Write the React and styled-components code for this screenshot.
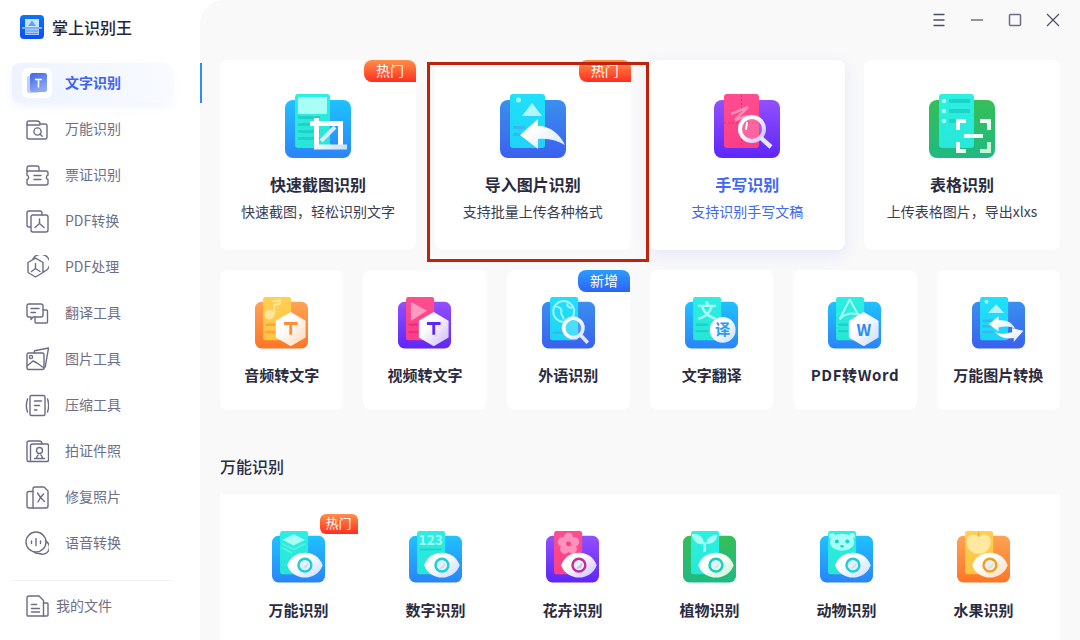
import React from 'react';
import styled, { createGlobalStyle } from 'styled-components';

const GlobalStyle = createGlobalStyle`
  html, body {
    margin: 0;
    padding: 0;
    background: #fff;
    font-family: "Noto Sans CJK SC", "Noto Sans", sans-serif;
  }
  * {
    box-sizing: border-box;
  }
`;

const Page = styled.div`
  display: flex;
  width: 1080px;
  height: 640px;
  overflow: hidden;
  background: #fff;
`;

const Sidebar = styled.aside`
  position: relative;
  z-index: 1;
  flex: 0 0 200px;
  padding: 15px 28px 0 12px;
`;

const Brand = styled.div`
  display: flex;
  align-items: center;
  gap: 8px;
  height: 24px;
  padding-left: 8px;
  margin-bottom: 24px;
  font-size: 16px;
  font-weight: 500;
  color: #23233a;
`;

const Nav = styled.nav`
  display: flex;
  flex-direction: column;
  gap: 6px;
`;

const NavItem = styled.div`
  position: relative;
  display: flex;
  align-items: center;
  gap: 13px;
  height: 40px;
  padding-left: 10px;
  border-radius: 8px;
  font-size: 14px;
  color: ${(p) => (p.$active ? '#3e63f2' : '#6d6f86')};
  font-weight: ${(p) => (p.$active ? 700 : 400)};
  background: ${(p) => (p.$active ? 'linear-gradient(90deg, #eef3ff, #f8faff)' : 'transparent')};
  box-shadow: ${(p) => (p.$active ? '0 4px 10px rgba(90, 130, 240, 0.08)' : 'none')};

  &::after {
    content: ${(p) => (p.$active ? '""' : 'none')};
    position: absolute;
    top: 0;
    bottom: 0;
    right: -30px;
    width: 2px;
    background: #2f8df5;
  }
`;

const NavLabel = styled.span`
  margin-top: -2px;
`;

const NavIconBox = styled.span`
  display: flex;
  align-items: center;
  justify-content: center;
  width: 30px;
  height: 30px;
  border-radius: 6px;
  background: ${(p) => (p.$active ? '#fff' : 'transparent')};
`;

const Footer = styled.div`
  display: flex;
  align-items: center;
  gap: 7px;
  height: 50px;
  margin-top: 17px;
  padding-left: 13px;
  border-top: 1px solid #f0f0f2;
  font-size: 14px;
  color: #6d6f86;
`;

const Main = styled.main`
  flex: 1;
  min-width: 0;
  padding: 0 20px;
  background: #f9f9fa;
  border-top-left-radius: 24px;
`;

const TopBar = styled.div`
  display: flex;
  align-items: center;
  justify-content: flex-end;
  gap: 20px;
  height: 60px;
  margin-right: -2px;
  padding-bottom: 20px;
`;

const WindowButton = styled.svg`
  display: block;
  width: 18px;
  height: 18px;
  fill: none;
  stroke: #4d4f63;
  stroke-width: 1.2;
`;

const TopGrid = styled.div`
  display: grid;
  grid-template-columns: repeat(4, 1fr);
  gap: 18.67px;
`;

const ToolGrid = styled.div`
  display: grid;
  grid-template-columns: repeat(6, 1fr);
  gap: 20px;
  margin-top: 20px;
`;

const Card = styled.div`
  position: relative;
  display: flex;
  flex-direction: column;
  align-items: center;
  background: #fff;
  border-radius: 8px;
  box-shadow: ${(p) => (p.$hover ? '0 5px 16px rgba(80, 110, 240, 0.12)' : 'none')};
`;

const BigCard = styled(Card)`
  height: 190px;
  padding-top: 34px;
`;

const SmallCard = styled(Card)`
  height: 140px;
  padding-top: 27px;
`;

const BigTitle = styled.div`
  margin-top: 14px;
  font-size: 16px;
  line-height: 24px;
  font-weight: 700;
  color: ${(p) => (p.$hover ? '#3e68f5' : '#2b2b40')};
`;

const BigSub = styled.div`
  margin-top: 5px;
  font-size: 14px;
  line-height: 20px;
  color: ${(p) => (p.$hover ? '#3e68f5' : '#3d3d50')};
`;

const SmallTitle = styled.div`
  margin-top: 15.6px;
  font-size: 15px;
  line-height: 22px;
  font-weight: 700;
  white-space: nowrap;
  letter-spacing: ${(p) => (p.$latin ? '0.6px' : '0')};
  color: #2b2b40;
`;

const PanelTitle = styled(SmallTitle)`
  margin-top: 16.6px;
`;

const Badge = styled.span`
  position: absolute;
  top: 0;
  right: 0;
  width: 52px;
  height: 22px;
  border-radius: 8px 8px 0 8px;
  font-size: 14px;
  line-height: 20px;
  text-align: center;
  color: #fff;
  background: ${(p) =>
    p.$tone === 'blue'
      ? 'linear-gradient(180deg, #2a9dff, #2f62f2)'
      : 'linear-gradient(180deg, #ff9048, #ff2e20)'};
`;

const MiniBadge = styled(Badge)`
  top: 20px;
  right: 9.5px;
  width: 38px;
  height: 20px;
  border-radius: 6px 6px 0 6px;
  font-size: 13px;
  line-height: 17px;
`;

const Highlight = styled.div`
  position: absolute;
  z-index: 2;
  top: 2px;
  left: -8px;
  right: -18px;
  bottom: -12px;
  border: 3px solid #c2210c;
  pointer-events: none;
`;

const SectionTitle = styled.h2`
  margin: 44px 0 16px;
  font-size: 16px;
  line-height: 24px;
  font-weight: 500;
  color: #2b2b40;
`;

const Panel = styled.section`
  display: grid;
  grid-template-columns: repeat(6, 137px);
  padding-left: 10px;
  height: 200px;
  background: #fff;
`;

const PanelItem = styled.div`
  position: relative;
  display: flex;
  flex-direction: column;
  align-items: center;
  padding-top: 37px;
`;

const ArtSvg = styled.svg`
  display: block;
  flex: none;
  overflow: visible;
  width: ${(p) => p.$width}px;
  height: ${(p) => (p.$width * 64) / 66}px;
`;

const LineSvg = styled.svg`
  display: block;
  flex: none;
  width: 24px;
  height: 24px;
  fill: none;
  stroke: #6b6d85;
  stroke-width: 1.4;
  stroke-linecap: round;
  stroke-linejoin: round;
`;

const palettes = {
  blue: { back: ['#1fc2ff', '#2a84f8'], front: ['#2ceee2', '#27e6d6'], mark: '#17d0d8', soft: '#c9defa', line: '#22d0c8' },
  indigo: { back: ['#3a90ee', '#3b60ee'], front: ['#20e0fb', '#1fd4f7'], mark: '#18b4e8', soft: '#cfe6fb', line: '#39b8ee' },
  purple: { back: ['#9350ff', '#5e26f8'], front: ['#ff4d90', '#fb3f86'], mark: '#c62a96', soft: '#cdbbf8', line: '#f32c7c' },
  green: { back: ['#36bf58', '#1fb982'], front: ['#2cf0e2', '#27e8d8'], mark: '#12d2b8', soft: '#c4f4d4', line: '#1cd4c6' },
  orange: { back: ['#ffa354', '#ff7526'], front: ['#ffd052', '#ffc445'], mark: '#f0a020', soft: '#fcd9b8', line: '#ffa83e' },
};

const Bars = ({ color, y, count = 3, x = 13, w = 16, gap = 7 }) =>
  Array.from({ length: count }).map((_, i) => (
    <rect key={i} x={x} y={y + i * gap} width={w} height="3" rx="1" fill={color} />
  ));

const Hex = ({ id }) => (
  <polygon
    points="44.5,20 62,30 62,50 44.5,60 27,50 27,30"
    fill={`url(#${id}-over)`}
    stroke={`url(#${id}-over)`}
    strokeWidth="2"
    strokeLinejoin="round"
  />
);

const Eye = ({ id, tone }) => (
  <>
    <path d="M19 42.5C26 22 56 22 63 42.5C56 63 26 63 19 42.5Z" fill={`url(#${id}-over)`} />
    <circle cx="41" cy="42.5" r="8" fill="#e6f1fb" stroke={tone.mark} strokeWidth="3" />
    <path d="M38 46.500L45 39.500A5.500 5.500 0 0 1 38 46.500Z" fill={tone.soft} />
  </>
);

const Lens = ({ id, cx, cy, r, ex, ey, w = 5 }) => (
  <>
    <circle cx={cx} cy={cy} r={r} fill="rgba(255,255,255,0.18)" stroke={`url(#${id}-over)`} strokeWidth={w} />
    <line x1={cx + r * 0.72} y1={cy + r * 0.72} x2={ex} y2={ey} stroke="#e8e6fb" strokeWidth="4.5" />
  </>
);

const artwork = {
  crop: {
    palette: 'blue',
    draw: (id, t) => (
      <>
        <rect x="13" y="3" width="29" height="17" rx="1" fill="#a9fff5" />
        <Bars color={t.line} y={22} count={4} w={22} />
        <path d="M25 29.500H55.500V53" fill="none" stroke="#fff" strokeWidth="5" />
        <path d="M31.500 24V53H62" fill="none" stroke={`url(#${id}-over)`} strokeWidth="5" />
        <line x1="36" y1="47" x2="50" y2="33" stroke="#dceafd" strokeWidth="4" />
      </>
    ),
  },
  import: {
    palette: 'indigo',
    draw: (id, t) => (
      <>
        <circle cx="18.500" cy="6" r="2.500" fill="#a4f2ff" />
        <polygon points="22,22 32,9 42,22" fill="#b3f5ff" />
        <Bars color={t.line} y={32} count={2} w={12} />
        <path d="M20 41L38 25V32C50 32 60 40 65 51C56 46 48 44 38 45V55Z" fill={`url(#${id}-over)`} />
      </>
    ),
  },
  hand: {
    palette: 'purple',
    draw: (id) => (
      <>
        <path d="M27.500 1V53M10 29H45" stroke="#d62672" strokeWidth="0.7" strokeDasharray="2 2" fill="none" />
        <path d="M17 20L34 13L21 26L33 22" stroke="#ff8fb8" strokeWidth="2.500" fill="none" />
        <Lens id={id} cx={38} cy={35} r={12} ex={57} ey={53} w={4} />
        <line x1="33" y1="29" x2="32" y2="35" stroke="#fff" strokeWidth="2" strokeLinecap="round" />
      </>
    ),
  },
  table: {
    palette: 'green',
    draw: (id, t) => (
      <>
        <circle cx="15" cy="7" r="2.300" fill="#a8fff4" />
        <circle cx="15" cy="17" r="2.300" fill="#a8fff4" />
        <circle cx="15" cy="27" r="2.300" fill="#a8fff4" />
        <rect x="20" y="5" width="21" height="4" rx="1" fill={t.line} />
        <rect x="20" y="15" width="21" height="4" rx="1" fill={t.line} />
        <rect x="20" y="25" width="8" height="4" rx="1" fill={t.line} />
        <path d="M29 36V27H37M51 27H60V36M29 48V57H37M51 57H60V48" fill="none" stroke={`url(#${id}-over)`} strokeWidth="4" />
        <rect x="35" y="40" width="19" height="4" fill="#f0fff8" />
      </>
    ),
  },
  audio: {
    palette: 'orange',
    draw: (id) => (
      <>
        <path d="M22 6L31 4V8L24 10V22" stroke="#ffe59a" strokeWidth="2.500" fill="none" />
        <circle cx="18" cy="22" r="6" fill="#ffe59a" />
        <Bars color="#ffa43c" y={33} count={2} w={12} gap={9} />
        <Hex id={id} />
        <path d="M36 33H53M44.500 33V47" stroke="#ff8c38" strokeWidth="3.500" fill="none" />
      </>
    ),
  },
  video: {
    palette: 'purple',
    draw: (id) => (
      <>
        <polygon points="16,6 36,17 16,30" fill="#ff9ac0" />
        <Bars color="#f32c7c" y={33} count={2} w={12} gap={9} />
        <Hex id={id} />
        <path d="M36 33H53M44.500 33V47" stroke="#5e26f8" strokeWidth="3.500" fill="none" />
      </>
    ),
  },
  foreign: {
    palette: 'indigo',
    draw: (id) => (
      <>
        <circle cx="27" cy="18" r="13" fill="none" stroke="#a8f2fd" strokeWidth="2.400" />
        <path d="M17 12C22 12 25 15 24 19C23 23 27 23 27 28M32 8C30 12 35 14 38 13" fill="none" stroke="#a8f2fd" strokeWidth="2.400" />
        <rect x="13" y="43" width="16" height="3" rx="1" fill="#39b8ee" />
        <Lens id={id} cx={39} cy={38.500} r={12} ex={57} ey={57} w={4.500} />
      </>
    ),
  },
  translate: {
    palette: 'blue',
    draw: (id, t) => (
      <>
        <text x="27" y="26" fontSize="24" fontWeight="700" textAnchor="middle" fill="#a8fff4">文</text>
        <Bars color={t.line} y={33} count={2} w={16} gap={8} />
        <circle cx="47" cy="41" r="16" fill={`url(#${id}-over)`} />
        <text x="47" y="47.500" fontSize="19" fontWeight="700" textAnchor="middle" fill="#2a9cf8">译</text>
      </>
    ),
  },
  word: {
    palette: 'blue',
    draw: (id, t) => (
      <>
        <path d="M27 3L15 27C22 20 32 19 42 23M27 3L37 21" fill="none" stroke="#a8fff4" strokeWidth="2.500" strokeLinejoin="round" />
        <Bars color={t.line} y={33} count={2} w={12} gap={8} />
        <Hex id={id} />
        <text x="44.500" y="49" fontSize="20" fontWeight="700" textAnchor="middle" fill="#2a8cf6">W</text>
      </>
    ),
  },
  convert: {
    palette: 'indigo',
    draw: (id, t) => (
      <>
        <circle cx="18" cy="6" r="2.500" fill="#a4f2ff" />
        <polygon points="20,20 30,9 40,20" fill="#b3f5ff" />
        <Bars color={t.line} y={28} count={3} w={14} />
        <path d="M21 34L33 24V29C42 28 50 31 54 40C48 36 42 36 33 38V43Z" fill={`url(#${id}-over)`} />
        <path d="M64 42L52 56V51C42 53 34 50 29 44C36 47 42 46 50 44V39Z" fill={`url(#${id}-over)`} />
      </>
    ),
  },
  general: {
    palette: 'blue',
    draw: (id, t) => (
      <>
        <polygon points="27,4 41,11 27,18 13,11" fill="#a8fff4" />
        <path d="M13 16L27 23L41 16M13 21L25 27" fill="none" stroke="#5ef0e4" strokeWidth="2" />
        <Eye id={id} tone={t} />
      </>
    ),
  },
  number: {
    palette: 'blue',
    draw: (id, t) => (
      <>
        <text x="27" y="18" fontSize="17" fontWeight="700" textAnchor="middle" fill="#a8fff4">123</text>
        <rect x="13" y="22" width="28" height="2" fill={t.line} />
        <Eye id={id} tone={t} />
      </>
    ),
  },
  flower: {
    palette: 'purple',
    draw: (id, t) => (
      <>
        {[0, 72, 144, 216, 288].map((a) => (
          <circle key={a} cx="28" cy="8" r="5.800" fill="#ff92ba" transform={`rotate(${a} 28 16)`} />
        ))}
        <circle cx="28" cy="16" r="3" fill="#fb3f86" />
        <Eye id={id} tone={t} />
      </>
    ),
  },
  plant: {
    palette: 'green',
    draw: (id, t) => (
      <>
        <path d="M11 4C20 2 26 8 26 16C18 18 12 12 11 4Z" fill="#a8fff4" />
        <path d="M43 5C36 4 29 9 29 16C36 17 42 12 43 5Z" fill="#a8fff4" />
        <rect x="25.500" y="14" width="3" height="12" fill="#a8fff4" />
        <Eye id={id} tone={t} />
      </>
    ),
  },
  animal: {
    palette: 'blue',
    draw: (id, t) => (
      <>
        <circle cx="15" cy="6" r="3.500" fill="#a8fff4" />
        <circle cx="40" cy="6" r="3.500" fill="#a8fff4" />
        <ellipse cx="27.500" cy="14" rx="15" ry="10.500" fill="#a8fff4" />
        <circle cx="21" cy="13" r="2.500" fill={t.line} />
        <circle cx="34" cy="13" r="2.500" fill={t.line} />
        <ellipse cx="27.500" cy="19" rx="2.200" ry="1.500" fill={t.line} />
        <Eye id={id} tone={t} />
      </>
    ),
  },
  fruit: {
    palette: 'orange',
    draw: (id, t) => (
      <>
        <path d="M27 7C20 2 12 5 12 13C12 22 20 30 27 28C34 30 42 22 42 13C42 5 34 2 27 7Z" fill="#ffe9a0" />
        <path d="M27 7V2" stroke="#f5a93c" strokeWidth="2" />
        <Eye id={id} tone={t} />
      </>
    ),
  },
};

const AppIcon = ({ name, width }) => {
  const art = artwork[name];
  const tone = palettes[art.palette];
  return (
    <ArtSvg $width={width} viewBox="0 0 66 64" fontFamily='"Noto Sans CJK SC", sans-serif'>
      <defs>
        <linearGradient id={`${name}-back`} x1="0" y1="0" x2="0" y2="1">
          <stop offset="0" stopColor={tone.back[0]} />
          <stop offset="1" stopColor={tone.back[1]} />
        </linearGradient>
        <linearGradient id={`${name}-front`} x1="0" y1="0" x2="0" y2="1">
          <stop offset="0" stopColor={tone.front[0]} />
          <stop offset="1" stopColor={tone.front[1]} />
        </linearGradient>
        <linearGradient id={`${name}-over`} x1="0" y1="0" x2="1" y2="1">
          <stop offset="0.35" stopColor="#fff" />
          <stop offset="1" stopColor={tone.soft} />
        </linearGradient>
      </defs>
      <rect x="0" y="6" width="66" height="58" rx="8" fill={`url(#${name}-back)`} />
      <rect x="10" y="0" width="35" height="54" rx="3" fill={`url(#${name}-front)`} />
      {art.draw(name, tone)}
    </ArtSvg>
  );
};

const lineIcons = {
  general: (
    <>
      <path d="M2 20V6a2 2 0 0 1 2-2h8a3 3 0 0 1 3 3h5a2 2 0 0 1 2 2v11a2 2 0 0 1-2 2H4a2 2 0 0 1-2-2Z" />
      <path d="M2 8h13" />
      <circle cx="12.500" cy="14.500" r="3.600" />
      <path d="M15 17l2.200 2.200" />
    </>
  ),
  ticket: (
    <>
      <path d="M2 8V5a2 2 0 0 1 2-2h8a2 2 0 0 1 2 2v3" />
      <path d="M2 8h19a2 2 0 0 1 2 2v2.200a2.300 2.300 0 0 0 0 4.400V20a2 2 0 0 1-2 2H4a2 2 0 0 1-2-2v-3.400a2.300 2.300 0 0 0 0-4.400Z" />
      <path d="M9 12.500h7M9 16.500h7" />
    </>
  ),
  pdfConvert: (
    <>
      <path d="M5.500 18H4a2 2 0 0 1-2-2V4a2 2 0 0 1 2-2h11a2 2 0 0 1 2 2v2" />
      <rect x="6" y="6" width="17" height="17" rx="2" />
      <path d="M14.500 10v4.500l-4.500 4M14.500 14.500l4.500 4" />
    </>
  ),
  pdfTools: (
    <>
      <path d="M10.500 3.200L18 7.500v10L10.500 22 3 17.500v-10Z" />
      <path d="M8 3.800A9 9 0 1 1 18 17" />
      <path d="M10.500 8.500v5l-4 3M10.500 13.500l4.500 3" />
    </>
  ),
  translate: (
    <>
      <path d="M4 3h12a2 2 0 0 1 2 2v9a2 2 0 0 1-2 2H8l-2 2.500V16H4a2 2 0 0 1-2-2V5a2 2 0 0 1 2-2Z" />
      <path d="M18 9h3.500a1 1 0 0 1 1 1v11a1 1 0 0 1-1 1H11a1 1 0 0 1-1-1v-5" />
      <path d="M6 7.500h8M6 11.500h4.500" />
    </>
  ),
  picture: (
    <>
      <rect x="2" y="6" width="17" height="16.500" rx="1.500" />
      <path d="M9 6l.6-2.200L23.500 1 20.200 20" />
      <path d="M2 19l6-5 4 2 7 5" />
      <circle cx="6" cy="10" r="1.600" />
    </>
  ),
  compress: (
    <>
      <rect x="5" y="2.500" width="15" height="20" rx="1.500" />
      <path d="M2.500 6c-1.400 4-1.400 9 0 13M22.500 6c1.400 4 1.400 9 0 13" />
      <path d="M9.500 8h7M9.500 12.500h5M9.500 17h2.500" />
    </>
  ),
  portrait: (
    <>
      <path d="M2 21V4a2 2 0 0 1 2-2h10a3 3 0 0 1 3 3h5a1.500 1.500 0 0 1 1.500 1.500V21a1.500 1.500 0 0 1-1.500 1.500H3.500A1.500 1.500 0 0 1 2 21Z" />
      <path d="M5.500 22V7a2 2 0 0 1 2-2H17" />
      <circle cx="14.500" cy="11.500" r="3" />
      <path d="M9.500 19.500h10M11.500 19.500c0-2 1-3 1.700-3.500M17.500 19.500c0-2-1-3-1.700-3.500" />
    </>
  ),
  repair: (
    <>
      <path d="M8 6.500H4a2 2 0 0 0-2 2V21a2 2 0 0 0 2 2h4" />
      <path d="M8 23V4a2 2 0 0 1 2-2h9l4 4v15a2 2 0 0 1-2 2Z" />
      <path d="M12.500 8l3 4.500M18.500 9l-3 3.500-2.500 4.500M15.500 12.500l4 4" />
    </>
  ),
  voice: (
    <>
      <circle cx="11" cy="11" r="10" />
      <path d="M20.500 10a6.500 6.500 0 0 1-6 12.500 6.500 6.500 0 0 1-6-2" />
      <path d="M6.500 10v2.500M11 7.500v7M15.500 10v2.500" />
    </>
  ),
  files: (
    <>
      <path d="M2 21V4a2 2 0 0 1 2-2h10l4.500 4.500V22H3a1 1 0 0 1-1-1Z" />
      <path d="M18.500 9H22a1 1 0 0 1 1 1v11a1 1 0 0 1-1 1h-3.500" />
      <path d="M6.500 10.500h5M6.500 14.500h8M6.500 18h8" />
    </>
  ),
};

const LineIcon = ({ name }) => <LineSvg viewBox="0 0 24 24">{lineIcons[name]}</LineSvg>;

const Logo = () => (
  <svg width="24" height="24" viewBox="0 0 24 24">
    <defs>
      <linearGradient id="logo-bg" x1="0" y1="0" x2="0" y2="1">
        <stop offset="0" stopColor="#0a74f8" />
        <stop offset="1" stopColor="#0a50fb" />
      </linearGradient>
    </defs>
    <rect width="24" height="24" rx="4" fill="url(#logo-bg)" />
    <rect x="5" y="4" width="14" height="8.500" fill="#c9e2fb" />
    <polygon points="8,11 12,5.500 16,11" fill="#5aa6f6" />
    <rect x="2" y="12" width="20" height="2" fill="#7fb0fb" />
    <rect x="5" y="14" width="14" height="6" fill="#a8c8fb" />
    <path d="M6 16h12M6 18.500h12" stroke="#5a94f8" strokeWidth="1" />
  </svg>
);

const ActiveIcon = () => (
  <svg width="20" height="20" viewBox="0 0 20 20">
    <defs>
      <linearGradient id="active-t" x1="0" y1="0" x2="0.4" y2="1">
        <stop offset="0" stopColor="#3d66ea" />
        <stop offset="1" stopColor="#8ea8f2" />
      </linearGradient>
    </defs>
    <rect x="0" y="3" width="12" height="17" rx="2" fill="#c2d0f8" />
    <rect x="3" y="0" width="17" height="19" rx="2.500" fill="url(#active-t)" />
    <path d="M8 6.500h7M11.500 6.500v8" stroke="#fff" strokeWidth="1.600" fill="none" />
  </svg>
);

const navItems = [
  ['万能识别', 'general'],
  ['票证识别', 'ticket'],
  ['PDF转换', 'pdfConvert'],
  ['PDF处理', 'pdfTools'],
  ['翻译工具', 'translate'],
  ['图片工具', 'picture'],
  ['压缩工具', 'compress'],
  ['拍证件照', 'portrait'],
  ['修复照片', 'repair'],
  ['语音转换', 'voice'],
];

const topCards = [
  { title: '快速截图识别', sub: '快速截图，轻松识别文字', icon: 'crop', badge: true },
  { title: '导入图片识别', sub: '支持批量上传各种格式', icon: 'import', badge: true, marked: true },
  { title: '手写识别', sub: '支持识别手写文稿', icon: 'hand', hover: true },
  { title: '表格识别', sub: '上传表格图片，导出xlxs', icon: 'table' },
];

const tools = [
  { title: '音频转文字', icon: 'audio' },
  { title: '视频转文字', icon: 'video' },
  { title: '外语识别', icon: 'foreign', badge: '新增' },
  { title: '文字翻译', icon: 'translate' },
  { title: 'PDF转Word', icon: 'word', latin: true },
  { title: '万能图片转换', icon: 'convert' },
];

const panelItems = [
  ['万能识别', 'general', true],
  ['数字识别', 'number'],
  ['花卉识别', 'flower'],
  ['植物识别', 'plant'],
  ['动物识别', 'animal'],
  ['水果识别', 'fruit'],
];

const App = () => (
  <Page>
    <GlobalStyle />
    <Sidebar>
      <Brand>
        <Logo />
        掌上识别王
      </Brand>
      <Nav>
        <NavItem $active>
          <NavIconBox $active>
            <ActiveIcon />
          </NavIconBox>
          <NavLabel>文字识别</NavLabel>
        </NavItem>
        {navItems.map(([label, icon]) => (
          <NavItem key={label}>
            <NavIconBox>
              <LineIcon name={icon} />
            </NavIconBox>
            <NavLabel>{label}</NavLabel>
          </NavItem>
        ))}
      </Nav>
      <Footer>
        <LineIcon name="files" />
        <NavLabel>我的文件</NavLabel>
      </Footer>
    </Sidebar>
    <Main>
      <TopBar>
        <WindowButton viewBox="0 0 18 18">
          <path d="M3.500 3.500h11M3.500 9h11M3.500 14.500h11" strokeWidth="1.500" />
        </WindowButton>
        <WindowButton viewBox="0 0 18 18">
          <path d="M3 9h12" />
        </WindowButton>
        <WindowButton viewBox="0 0 18 18">
          <rect x="3.500" y="3.500" width="11" height="11" rx="1" strokeWidth="1.500" stroke="#6b6d80" />
        </WindowButton>
        <WindowButton viewBox="0 0 18 18">
          <path d="M3 3l12 12M15 3L3 15" />
        </WindowButton>
      </TopBar>
      <TopGrid>
        {topCards.map((card) => (
          <BigCard key={card.title} $hover={card.hover}>
            {card.badge && <Badge>热门</Badge>}
            <AppIcon name={card.icon} width={66} />
            <BigTitle $hover={card.hover}>{card.title}</BigTitle>
            <BigSub $hover={card.hover}>{card.sub}</BigSub>
            {card.marked && <Highlight />}
          </BigCard>
        ))}
      </TopGrid>
      <ToolGrid>
        {tools.map((tool) => (
          <SmallCard key={tool.title}>
            {tool.badge && <Badge $tone="blue">{tool.badge}</Badge>}
            <AppIcon name={tool.icon} width={53} />
            <SmallTitle $latin={tool.latin}>{tool.title}</SmallTitle>
          </SmallCard>
        ))}
      </ToolGrid>
      <SectionTitle>万能识别</SectionTitle>
      <Panel>
        {panelItems.map(([title, icon, hot]) => (
          <PanelItem key={title}>
            {hot && <MiniBadge>热门</MiniBadge>}
            <AppIcon name={icon} width={53} />
            <PanelTitle>{title}</PanelTitle>
          </PanelItem>
        ))}
      </Panel>
    </Main>
  </Page>
);

export default App;
